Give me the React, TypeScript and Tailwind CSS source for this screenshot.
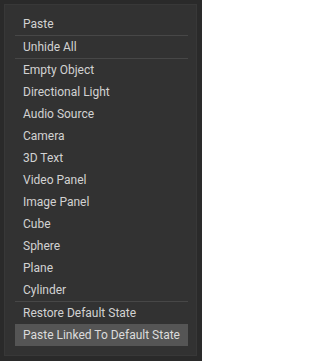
import React from "react";

type Item = { label: string; sepAfter?: boolean; active?: boolean };

const items: Item[] = [
  { label: "Paste", sepAfter: true },
  { label: "Unhide All", sepAfter: true },
  { label: "Empty Object" },
  { label: "Directional Light" },
  { label: "Audio Source" },
  { label: "Camera" },
  { label: "3D Text" },
  { label: "Video Panel" },
  { label: "Image Panel" },
  { label: "Cube" },
  { label: "Sphere" },
  { label: "Plane" },
  { label: "Cylinder", sepAfter: true },
  { label: "Restore Default State" },
  { label: "Paste Linked To Default State", active: true },
];

export default function App() {
  return (
    <div
      className="w-[202px] h-[361px] bg-[#2a2a2a] pl-[4px] pt-[4px] pr-[5px] pb-[5px]"
      style={{ fontFamily: "Roboto, 'Liberation Sans', sans-serif" }}
    >
      <div className="h-full bg-[#323232] border border-[#383838] pl-[10px] pr-[8px] pt-[8px] pb-[9px]">
        <ul className="flex flex-col">
          {items.map((it) => (
            <li key={it.label} className="flex flex-col">
              <div
                className={
                  it.active
                    ? "h-[22px] flex items-center pl-[8px] text-[12px] leading-none text-[#dcdcdc] bg-[#555555]"
                    : "h-[22px] flex items-center pl-[8px] text-[12px] leading-none text-[#d2d2d2]"
                }
              >
                {it.label}
              </div>
              {it.sepAfter && <div className="h-px bg-[#474747]" />}
            </li>
          ))}
        </ul>
      </div>
    </div>
  );
}
